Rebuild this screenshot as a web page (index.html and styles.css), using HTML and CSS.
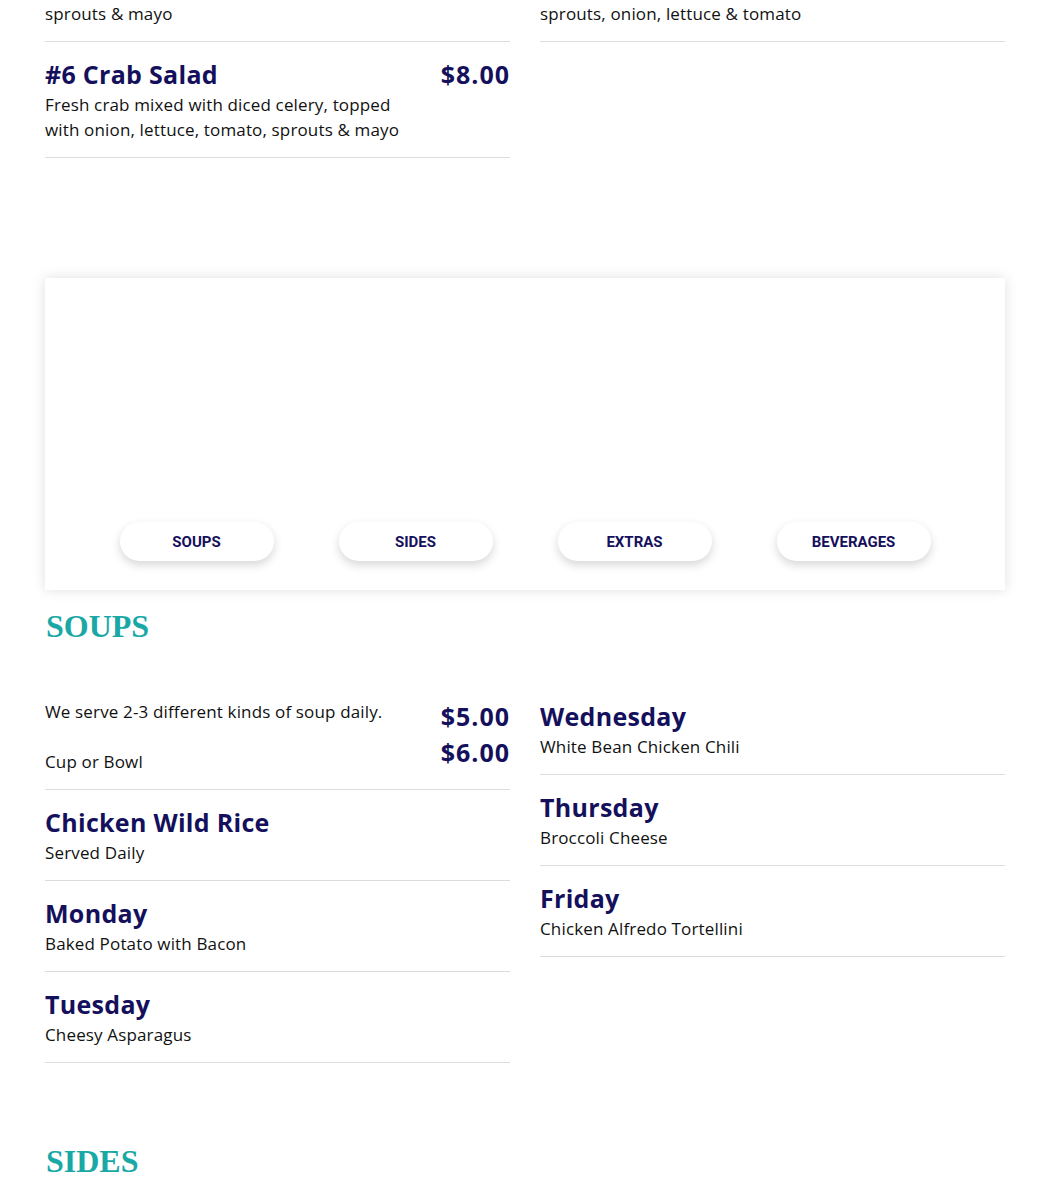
FILE: index.html
```html
<!DOCTYPE html>
<html lang="en">
<head>
<meta charset="utf-8">
<title>Menu</title>
<link rel="stylesheet" href="styles.css">
</head>
<body>
<div class="page">
  <section class="columns top">
    <div class="col">
      <div class="item">
        <div class="item-body">
          <h3 class="item-title">#5 Tuna Salad</h3>
          <p class="item-desc">Tuna with celery, lettuce, tomato,<br>sprouts &amp; mayo</p>
        </div>
        <div class="price">$8.00</div>
      </div>
      <div class="item">
        <div class="item-body">
          <h3 class="item-title">#6 Crab Salad</h3>
          <p class="item-desc">Fresh crab mixed with diced celery, topped with onion, lettuce, tomato, sprouts &amp; mayo</p>
        </div>
        <div class="price">$8.00</div>
      </div>
    </div>
    <div class="col">
      <div class="item">
        <div class="item-body wide">
          <h3 class="item-title">#4 Veggie</h3>
          <p class="item-desc">Cucumber, avocado, pepperjack, cheddar,<br>sprouts, onion, lettuce &amp; tomato</p>
        </div>
        <div class="price">$7.00</div>
      </div>
    </div>
  </section>

  <nav class="panel">
    <div class="tabs">
      <a class="tab" href="#soups">Soups</a>
      <a class="tab" href="#sides">Sides</a>
      <a class="tab" href="#extras">Extras</a>
      <a class="tab" href="#beverages">Beverages</a>
    </div>
  </nav>

  <section class="section" id="soups">
    <h2 class="section-title">Soups</h2>
    <div class="columns">
      <div class="col">
        <div class="item">
          <div class="item-body">
            <p class="note">We serve 2-3 different kinds of soup daily.</p>
            <p class="note second">Cup or Bowl</p>
          </div>
          <div class="prices">
            <div class="price">$5.00</div>
            <div class="price next">$6.00</div>
          </div>
        </div>
        <div class="item">
          <div class="item-body">
            <h3 class="item-title">Chicken Wild Rice</h3>
            <p class="item-desc">Served Daily</p>
          </div>
        </div>
        <div class="item">
          <div class="item-body">
            <h3 class="item-title">Monday</h3>
            <p class="item-desc">Baked Potato with Bacon</p>
          </div>
        </div>
        <div class="item">
          <div class="item-body">
            <h3 class="item-title">Tuesday</h3>
            <p class="item-desc">Cheesy Asparagus</p>
          </div>
        </div>
      </div>
      <div class="col">
        <div class="item">
          <div class="item-body">
            <h3 class="item-title">Wednesday</h3>
            <p class="item-desc">White Bean Chicken Chili</p>
          </div>
        </div>
        <div class="item">
          <div class="item-body">
            <h3 class="item-title">Thursday</h3>
            <p class="item-desc">Broccoli Cheese</p>
          </div>
        </div>
        <div class="item">
          <div class="item-body">
            <h3 class="item-title">Friday</h3>
            <p class="item-desc">Chicken Alfredo Tortellini</p>
          </div>
        </div>
      </div>
    </div>
  </section>

  <section class="section sides" id="sides">
    <h2 class="section-title">Sides</h2>
  </section>
</div>
</body>
</html>
```

FILE: styles.css
```css
html, body {
  margin: 0;
  padding: 0;
  background: #ffffff;
}

body {
  font-family: "Open Sans", "Noto Sans", sans-serif;
  color: #111111;
  overflow: hidden;
}

.page {
  width: 960px;
  margin: 0 auto;
}

.columns {
  display: grid;
  grid-template-columns: 1fr 1fr;
  column-gap: 30px;
  align-items: start;
}

.top {
  margin-top: -74px;
}

.col {
  display: flex;
  flex-direction: column;
}

.item {
  display: flex;
  justify-content: space-between;
  align-items: flex-start;
  gap: 20px;
  padding: 17px 0 15px;
  border-bottom: 1px solid #dcdcdc;
}

.item-body {
  max-width: 370px;
}

.item-body.wide {
  max-width: 420px;
}

.item-title {
  margin: 0;
  font-size: 25px;
  line-height: 30px;
  font-weight: 700;
  letter-spacing: 0.3px;
  color: #15105c;
}

.item-desc {
  margin: 3px 0 0;
  font-size: 17px;
  line-height: 25px;
  letter-spacing: 0.15px;
}

.price {
  font-size: 25px;
  line-height: 30px;
  font-weight: 700;
  letter-spacing: 1px;
  color: #15105c;
  white-space: nowrap;
}

.price.next {
  margin-top: 6px;
}

.note {
  margin: 0;
  font-size: 17px;
  line-height: 22px;
  letter-spacing: 0.15px;
}

.note.second {
  margin-top: 26px;
  line-height: 25px;
}

.panel {
  margin-top: 120px;
  background: #ffffff;
  box-shadow: 0 0 12px rgba(0, 0, 0, 0.13);
  padding: 244px 0 29px;
}

.tabs {
  display: flex;
  justify-content: center;
  gap: 65px;
}

.tab {
  width: 154px;
  height: 39px;
  border-radius: 20px;
  background: #ffffff;
  box-shadow: 0 4px 10px rgba(0, 0, 0, 0.16);
  display: flex;
  align-items: center;
  justify-content: center;
  font-family: Roboto, "Liberation Sans", sans-serif;
  font-weight: 700;
  font-size: 15px;
  text-transform: uppercase;
  text-decoration: none;
  color: #15105c;
}

.section-title {
  margin: 16px 0 38px;
  padding-left: 1px;
  font-family: "Liberation Serif", "Times New Roman", serif;
  font-size: 32px;
  line-height: 40px;
  font-weight: 700;
  text-transform: uppercase;
  color: #1aa8a6;
}

.sides .section-title {
  margin-top: 78px;
}
```
